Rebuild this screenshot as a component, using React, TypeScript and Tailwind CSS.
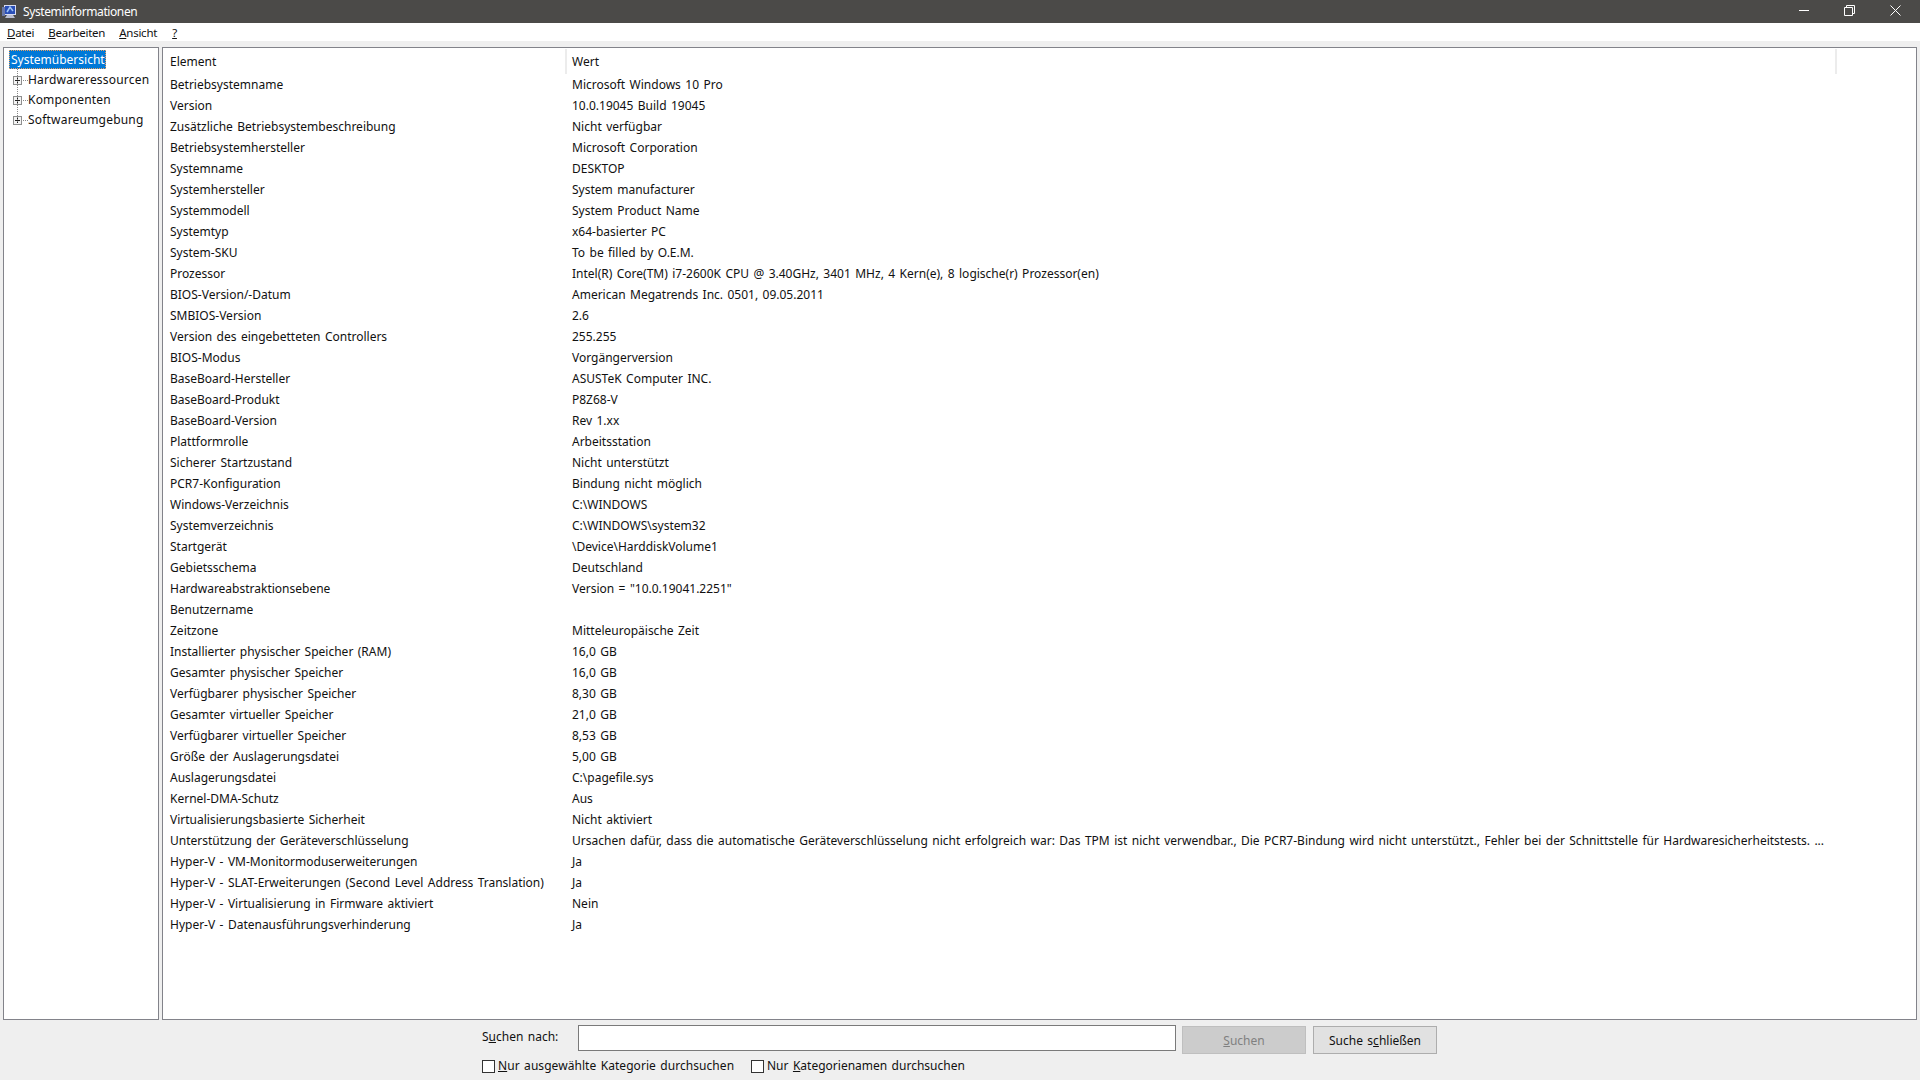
import React from "react";

const rows: [string, string][] = [
  ["Betriebsystemname", "Microsoft Windows 10 Pro"],
  ["Version", "10.0.19045 Build 19045"],
  ["Zusätzliche Betriebsystembeschreibung", "Nicht verfügbar"],
  ["Betriebsystemhersteller", "Microsoft Corporation"],
  ["Systemname", "DESKTOP"],
  ["Systemhersteller", "System manufacturer"],
  ["Systemmodell", "System Product Name"],
  ["Systemtyp", "x64-basierter PC"],
  ["System-SKU", "To be filled by O.E.M."],
  ["Prozessor", "Intel(R) Core(TM) i7-2600K CPU @ 3.40GHz, 3401 MHz, 4 Kern(e), 8 logische(r) Prozessor(en)"],
  ["BIOS-Version/-Datum", "American Megatrends Inc. 0501, 09.05.2011"],
  ["SMBIOS-Version", "2.6"],
  ["Version des eingebetteten Controllers", "255.255"],
  ["BIOS-Modus", "Vorgängerversion"],
  ["BaseBoard-Hersteller", "ASUSTeK Computer INC."],
  ["BaseBoard-Produkt", "P8Z68-V"],
  ["BaseBoard-Version", "Rev 1.xx"],
  ["Plattformrolle", "Arbeitsstation"],
  ["Sicherer Startzustand", "Nicht unterstützt"],
  ["PCR7-Konfiguration", "Bindung nicht möglich"],
  ["Windows-Verzeichnis", "C:\\WINDOWS"],
  ["Systemverzeichnis", "C:\\WINDOWS\\system32"],
  ["Startgerät", "\\Device\\HarddiskVolume1"],
  ["Gebietsschema", "Deutschland"],
  ["Hardwareabstraktionsebene", "Version = \"10.0.19041.2251\""],
  ["Benutzername", ""],
  ["Zeitzone", "Mitteleuropäische Zeit"],
  ["Installierter physischer Speicher (RAM)", "16,0 GB"],
  ["Gesamter physischer Speicher", "16,0 GB"],
  ["Verfügbarer physischer Speicher", "8,30 GB"],
  ["Gesamter virtueller Speicher", "21,0 GB"],
  ["Verfügbarer virtueller Speicher", "8,53 GB"],
  ["Größe der Auslagerungsdatei", "5,00 GB"],
  ["Auslagerungsdatei", "C:\\pagefile.sys"],
  ["Kernel-DMA-Schutz", "Aus"],
  ["Virtualisierungsbasierte Sicherheit", "Nicht aktiviert"],
  ["Unterstützung der Geräteverschlüsselung", "Ursachen dafür, dass die automatische Geräteverschlüsselung nicht erfolgreich war: Das TPM ist nicht verwendbar., Die PCR7-Bindung wird nicht unterstützt., Fehler bei der Schnittstelle für Hardwaresicherheitstests. ..."],
  ["Hyper-V - VM-Monitormoduserweiterungen", "Ja"],
  ["Hyper-V - SLAT-Erweiterungen (Second Level Address Translation)", "Ja"],
  ["Hyper-V - Virtualisierung in Firmware aktiviert", "Nein"],
  ["Hyper-V - Datenausführungsverhinderung", "Ja"],
];

function Plus() {
  return (
    <svg width="9" height="9" viewBox="0 0 9 9" className="shrink-0">
      <rect x="0.5" y="0.5" width="8" height="8" fill="#f4f4f4" stroke="#8e8f8f" />
      <path d="M2 4.5H7M4.5 2V7" stroke="#222" />
    </svg>
  );
}

function TreeItem({ label }: { label: string }) {
  return (
    <div className="flex h-[20px] items-center pl-[5px]">
      <Plus />
      <div className="ml-px w-[5px] border-t border-dotted border-[#888]" />
      <span className="tracking-[0.2px]">{label}</span>
    </div>
  );
}

export default function App() {
  return (
    <div className="flex h-[1080px] w-[1920px] flex-col overflow-hidden bg-[#efefef] text-[12px] leading-[16px] text-[#111] [word-spacing:1.3px] font-['Noto_Sans',sans-serif]">
      <div className="flex h-[23px] shrink-0 items-center bg-[#4b4a48] pr-[2px] text-white">
        <svg width="16" height="16" viewBox="0 0 16 16" className="ml-[2px]">
          <rect x="2" y="1" width="12" height="10" fill="#d8dcf0" />
          <rect x="3" y="2" width="10" height="8" fill="#2a4fb8" />
          <path d="M5 8L8 3L11 7" stroke="#9fc4f5" strokeWidth="1.5" fill="none" />
          <path d="M5 11H11L13 14H3Z" fill="#b9bdd0" />
          <rect x="0" y="3" width="3" height="9" fill="#6a78a8" />
        </svg>
        <span className="ml-[5px] tracking-[-0.4px]">Systeminformationen</span>
        <div className="ml-auto flex items-center">
          <svg width="46" height="23" viewBox="0 0 46 23"><path d="M19 10.5H29" stroke="#fff" /></svg>
          <svg width="46" height="23" viewBox="0 0 46 23">
            <path d="M18.5 7.5H26.5V15.5H18.5ZM20.5 7V5.5H28.5V13.5H27" stroke="#fff" fill="none" />
          </svg>
          <svg width="46" height="23" viewBox="0 0 46 23">
            <path d="M18.5 5.5L28.5 15.5M28.5 5.5L18.5 15.5" stroke="#fff" />
          </svg>
        </div>
      </div>

      <div className="flex h-[18px] shrink-0 items-center gap-[14px] bg-white pl-[7px] pt-[2px] text-[11.5px] tracking-[-0.25px]">
        <span><u>D</u>atei</span>
        <span><u>B</u>earbeiten</span>
        <span><u>A</u>nsicht</span>
        <span className="ml-[1px]"><u>?</u></span>
      </div>

      <div className="flex h-[979px] shrink-0 gap-[3px] pl-[3px] pr-[3px] pt-[6px]">
        <div className="w-[156px] shrink-0 border border-[#82838a] bg-white pl-[5px] pt-[2px]">
          <div className="relative">
            <div className="h-[19px] w-[97px] border border-dotted border-[#e8a060] bg-[#0078d7] pl-[1px] leading-[17px] text-white">Systemübersicht</div>
            <div className="absolute left-[8px] top-[19px] h-[53px] border-l border-dotted border-[#888]" />
            <div className="-ml-[1px] -mt-[1px] pt-[2px]">
              <TreeItem label="Hardwareressourcen" />
              <TreeItem label="Komponenten" />
              <TreeItem label="Softwareumgebung" />
            </div>
          </div>
        </div>

        <div className="flex min-w-0 flex-1 flex-col border border-[#82838a] bg-white">
          <div className="flex h-[26px] shrink-0 items-center">
            <div className="w-[402px] pl-[7px] pt-[2px]">Element</div>
            <div className="h-[25px] w-[1272px] border-l-2 border-r-2 border-[#ececec] pl-[5px] leading-[26px]">Wert</div>
          </div>
          {rows.map(([k, v]) => (
            <div key={k} className="flex h-[21px] shrink-0 items-center whitespace-nowrap">
              <div className="w-[403px] shrink-0 pl-[7px]">{k}</div>
              <div className="pl-[6px]">{v}</div>
            </div>
          ))}
        </div>
      </div>

      <div className="flex flex-col pl-[482px]">
        <div className="mt-[5px] flex items-start">
          <span className="mt-[4px] w-[96px]">S<u>u</u>chen nach:</span>
          <div className="h-[26px] w-[598px] border border-[#7a7a7a] bg-white" />
          <div className="ml-[6px] mt-[1px] flex h-[28px] w-[124px] items-center justify-center border border-[#bfbfbf] bg-[#cccccc] pt-[1px] text-[#808080]"><span><u>S</u>uchen</span></div>
          <div className="ml-[7px] mt-[1px] flex h-[28px] w-[124px] items-center justify-center border border-[#adadad] bg-[#e1e1e1] pt-[1px]"><span>Suche s<u>c</u>hließen</span></div>
        </div>
        <div className="mt-[4px] flex items-center">
          <div className="h-[13px] w-[13px] border border-[#333] bg-white" />
          <span className="ml-[3px] w-[253px] tracking-[0.05px]"><u>N</u>ur ausgewählte Kategorie durchsuchen</span>
          <div className="h-[13px] w-[13px] border border-[#333] bg-white" />
          <span className="ml-[3px]">Nur <u>K</u>ategorienamen durchsuchen</span>
        </div>
      </div>
    </div>
  );
}
